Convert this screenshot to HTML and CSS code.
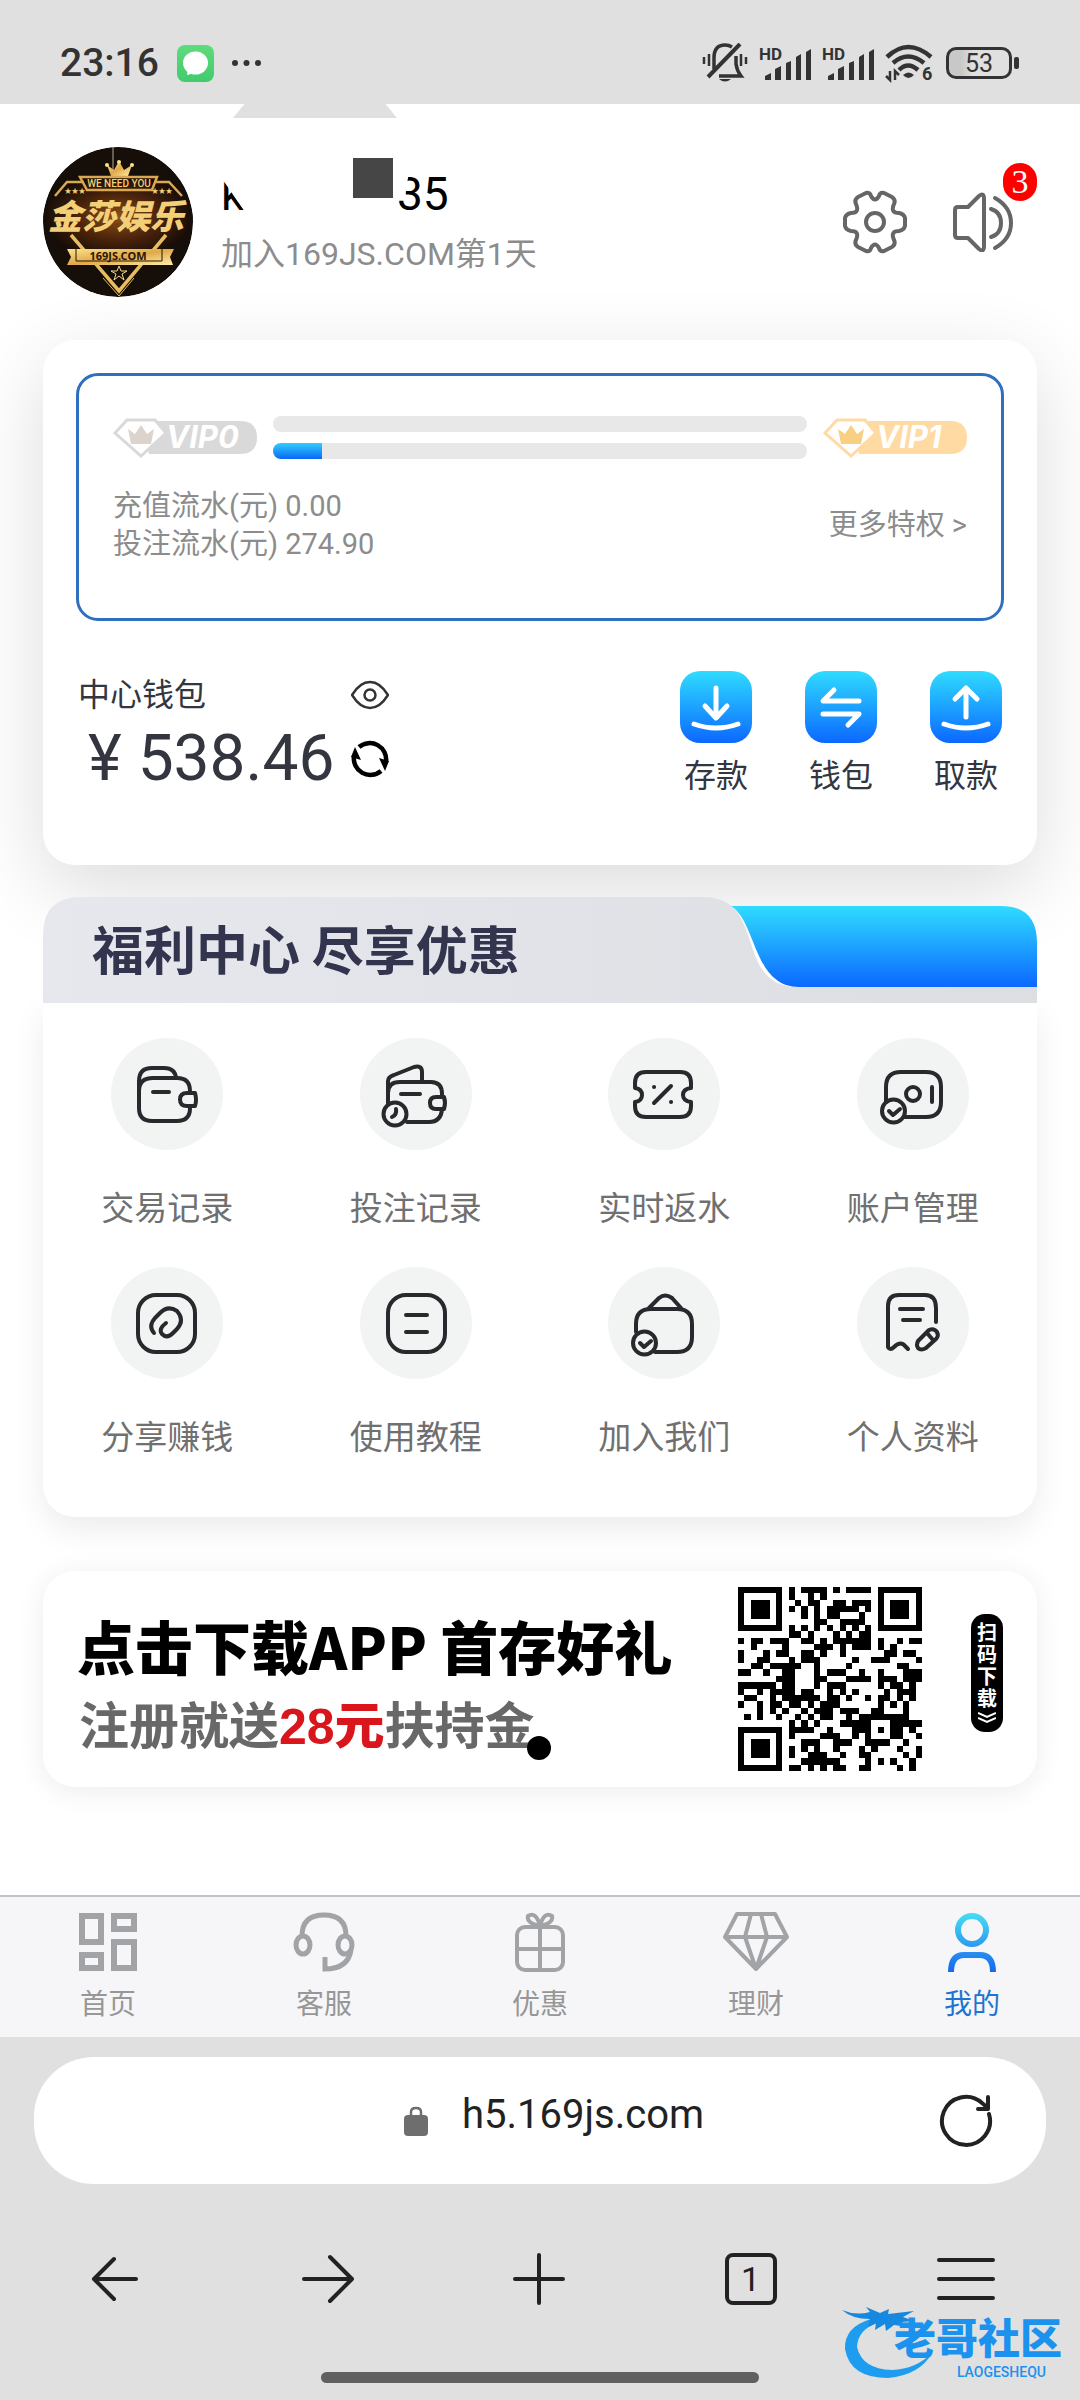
FILE: index.html
```html
<!DOCTYPE html>
<html lang="zh-CN">

<head>
    <meta charset="UTF-8">
    <meta name="viewport" content="width=device-width, initial-scale=1">
    <title>我的</title>
    <link rel="stylesheet" href="styles.css">
</head>

<body>

    <div class="statusbar">
        <span class="time">23:16</span>
        <svg class="msg" width="37" height="37" viewBox="0 0 37 37">
            <defs>
                <linearGradient id="green" x1="0" y1="0" x2="0" y2="1">
                    <stop offset="0" stop-color="#5fdc7c" />
                    <stop offset="1" stop-color="#3fcb6c" />
                </linearGradient>
                <linearGradient id="blue" x1="0" y1="0" x2="0" y2="1">
                    <stop offset="0" stop-color="#2fdcff" />
                    <stop offset="1" stop-color="#0b68ff" />
                </linearGradient>
            </defs>
            <rect width="37" height="37" rx="8" fill="url(#green)" />
            <ellipse cx="18.500" cy="18" rx="12.500" ry="11.500" fill="#fff" />
            <path d="M11 24 l-1 6 l8-2z" fill="#fff" />
        </svg>
        <svg width="29" height="8" viewBox="0 0 29 8" fill="#333">
            <circle cx="3" cy="4" r="3" />
            <circle cx="14.500" cy="4" r="3" />
            <circle cx="26" cy="4" r="3" />
        </svg>
        <div class="status-icons">
            <svg width="46" height="40" viewBox="0 0 46 40" fill="none" stroke="#333" stroke-width="3.500">
                <path d="M12 26 V15 Q12 2 23 2 Q27 2 30 4 M34 13 V21 Q35 28 39 33 H17" />
                <path d="M38 1 L6 34" stroke-width="4" />
                <path d="M2 14 v7 M7 11 v12 M39 11 v12 M44 14 v7" stroke-width="2.500" />
                <path d="M17 36 h12 q-6 5 -12 0z" fill="#333" stroke="none" />
            </svg>
            <svg class="signal" width="52" height="42" viewBox="0 -6 52 42">
                <text class="hd" x="0" y="12">HD</text>
                <path d="M6 32 v-4 l6-3 v7z M16 32 V21 l6-3 v14z M27 32 V15 l5-2 v19z M37 32 V9 l5-3 v26z M47 32 V4 l5-3 v31z" />
            </svg>
            <svg class="signal" width="52" height="42" viewBox="0 -6 52 42">
                <text class="hd" x="0" y="12">HD</text>
                <path d="M6 32 v-4 l6-3 v7z M16 32 V21 l6-3 v14z M27 32 V15 l5-2 v19z M37 32 V9 l5-3 v26z M47 32 V4 l5-3 v31z" />
            </svg>
            <svg width="50" height="46" viewBox="0 -4 50 46" fill="none" stroke="#333" stroke-width="4.500">
                <path d="M2 13 Q23 -7 46 13" />
                <path d="M8 19 Q23 6 39 19" />
                <path d="M14 26 Q23 17 33 26" />
                <path d="M18 31 q5.500-5 11 0 q-5.500 6 -11 0z" fill="#333" stroke="none" />
                <path d="M5 27 v9 l-4-4 M10 36 v-9 l4 4" stroke-width="2.500" />
                <text class="wifi6" x="37" y="36">6</text>
            </svg>
            <div class="battery"><span>53</span></div>
        </div>
    </div>

    <main>
        <header class="profile">
            <div class="notch"></div>
            <svg class="avatar" viewBox="0 0 150 150">
                <defs>
                    <radialGradient id="brown" cx=".5" cy=".5" r=".5">
                        <stop offset="0" stop-color="#8a5018" />
                        <stop offset=".55" stop-color="#4a230a" />
                        <stop offset="1" stop-color="#160d07" />
                    </radialGradient>
                    <linearGradient id="gold" x1="0" y1="0" x2="1" y2="1">
                        <stop offset="0" stop-color="#fbe38c" />
                        <stop offset=".5" stop-color="#e0a94a" />
                        <stop offset="1" stop-color="#fff0a8" />
                    </linearGradient>
                </defs>
                <circle cx="75" cy="75" r="75" fill="#160e08" />
                <ellipse cx="75" cy="70" rx="75" ry="42" fill="url(#brown)" />
                <path d="M70 0 v24" stroke="#b9aa94" />
                <path d="M68 29 l-4-11 l7 5 l5-9 l5 9 l8-5 l-4 11z" fill="url(#gold)" />
                <circle cx="64" cy="18" r="2" fill="#fbe38c" />
                <circle cx="76" cy="15" r="2" fill="#fbe38c" />
                <circle cx="89" cy="18" r="2" fill="#fbe38c" />
                <path d="M37 30 H114 L109 43 H44z M41 35 H24 L12 49 M111 35 H126 L139 49" fill="none" stroke="#d9a850" stroke-width="2.500" />
                <text class="a-need" x="76" y="40">WE NEED YOU</text>
                <text class="a-star" x="32" y="46">★★★</text>
                <text class="a-star" x="119" y="46">★★★</text>
                <text class="a-name" x="73" y="82">金莎娱乐</text>
                <path d="M28 88 L76 144 L123 88" fill="none" stroke="#e8bd60" stroke-width="3.500" />
                <path d="M60 131 L76 149 L91 131" fill="none" stroke="#e8bd60" />
                <path d="M24 102 H131 L127 110 L130 118 H24 L28 110z" fill="url(#gold)" />
                <path d="M33 102 v12 h86 v-12" fill="none" stroke="#2a1507" />
                <text class="a-site" x="75" y="113">169JS.COM</text>
                <path d="M76 119 l2 5 h6 l-5 3 l2 6 l-5-4 l-5 4 l2-6 l-5-3 h6z" fill="none" stroke="#f3d98a" />
            </svg>
            <div class="who">
                <h1><span class="k">k</span><span class="mask"></span><span class="tail">35</span></h1>
                <p>加入169JS.COM第1天</p>
            </div>
            <button class="top-btn" aria-label="设置">
                <svg width="64" height="64" viewBox="0 0 64 64" fill="none" stroke="#666" stroke-width="4" stroke-linejoin="round">
                    <path d="M23 3 Q27 2 28 6 Q32 13 36 6 Q37 2 41 3 L49 7 Q53 10 51 14 Q47 23 56 23 Q61 24 62 28 V36 Q61 40 56 41 Q47 41 51 50 Q53 54 49 57 L41 61 Q37 62 36 58 Q32 51 28 58 Q27 62 23 61 L15 57 Q11 54 13 50 Q17 41 8 41 Q3 40 2 36 V28 Q3 24 8 23 Q17 23 13 14 Q11 10 15 7z" />
                    <circle cx="32" cy="32" r="9" />
                </svg>
            </button>
            <button class="top-btn" aria-label="消息">
                <svg width="60" height="60" viewBox="0 0 60 60" fill="none" stroke="#666" stroke-width="4" stroke-linecap="round" stroke-linejoin="round">
                    <path d="M15 15 H5 Q2 15 2 18 V43 Q2 46 5 46 H15 L26 57 Q31 61 31 54 V7 Q31 0 26 4z" />
                    <path d="M38 17 Q48 20 48 31 Q48 42 38 45 M42 6 Q58 15 58 31 Q58 47 42 56" />
                </svg>
                <span class="badge">3</span>
            </button>
        </header>

        <section class="card wallet-card">
            <div class="vip">
                <div class="vip-row">
                    <svg class="vip-badge zero" width="144" height="40" viewBox="0 0 144 40">
                        <path d="M30 3 H127 Q144 3 144 19.500 Q144 36 127 36 H36z" />
                        <path class="gem" d="M14 2 H42 L53 15 L28 38 L2 15z" />
                        <path class="crown" d="M15 11 l7 5 l6-9 l6 9 l7-5 l-3 15 H18z" />
                        <text x="53" y="30">VIP0</text>
                    </svg>
                    <div class="bars">
                        <div class="bar"></div>
                        <div class="bar"><span style="width: 9.2%"></span></div>
                    </div>
                    <svg class="vip-badge one" width="144" height="40" viewBox="0 0 144 40">
                        <path d="M30 3 H127 Q144 3 144 19.500 Q144 36 127 36 H36z" />
                        <path class="gem" d="M14 2 H42 L53 15 L28 38 L2 15z" />
                        <path class="crown" d="M15 11 l7 5 l6-9 l6 9 l7-5 l-3 15 H18z" />
                        <text x="53" y="30">VIP1</text>
                    </svg>
                </div>
                <div class="vip-info">
                    <div>
                        <p>充值流水(元) 0.00</p>
                        <p>投注流水(元) 274.90</p>
                    </div>
                    <a href="#">更多特权 &gt;</a>
                </div>
            </div>

            <div class="wallet">
                <div class="balance">
                    <div class="balance-row">
                        <span>中心钱包</span>
                        <button aria-label="隐藏余额">
                            <svg width="38" height="30" viewBox="0 0 38 30" fill="none" stroke="#333" stroke-width="2.500">
                                <path d="M1 15 Q9 2 19 2 Q29 2 37 15 Q29 28 19 28 Q9 28 1 15z" />
                                <circle cx="19" cy="15" r="5.500" />
                            </svg>
                        </button>
                    </div>
                    <div class="balance-row">
                        <strong><i>¥</i>538.46</strong>
                        <button aria-label="刷新余额">
                            <svg width="38" height="38" viewBox="0 0 38 38" fill="none" stroke="#000" stroke-width="4.500">
                                <path d="M8 7 A16.500 16.500 0 0 1 35 22 M30 31 A16.500 16.500 0 0 1 3 16" />
                                <path d="M28 18 l10 3 l-4 10z M10 20 l-10-3 l4-10z" fill="#000" stroke="none" />
                            </svg>
                        </button>
                    </div>
                </div>
                <div class="actions">
                    <button>
                        <svg width="72" height="72" viewBox="0 0 72 72">
                            <rect width="72" height="72" rx="20" fill="url(#blue)" />
                            <path d="M36 17 V46 M25 35 L36 47 L47 35 M14 53 Q36 61 58 53" />
                        </svg>
                        存款
                    </button>
                    <button>
                        <svg width="72" height="72" viewBox="0 0 72 72">
                            <rect width="72" height="72" rx="20" fill="url(#blue)" />
                            <path d="M29 19 L18 30 H54 M18 43 H54 L43 54" />
                        </svg>
                        钱包
                    </button>
                    <button>
                        <svg width="72" height="72" viewBox="0 0 72 72">
                            <rect width="72" height="72" rx="20" fill="url(#blue)" />
                            <path d="M36 46 V18 M25 28 L36 17 L47 28 M14 53 Q36 61 58 53" />
                        </svg>
                        取款
                    </button>
                </div>
            </div>
        </section>

        <section class="welfare">
            <div class="welfare-head">
                <svg class="welfare-bg" viewBox="0 0 994 106" preserveAspectRatio="none">
                    <defs>
                        <linearGradient id="grey" x1="0" y1="0" x2="1" y2="0">
                            <stop offset="0" stop-color="#e7e8ee" />
                            <stop offset="1" stop-color="#dddee2" />
                        </linearGradient>
                    </defs>
                    <path d="M0 106 V38 Q0 0 38 0 H660 C725 0 690 90 755 90 H994 V106z" fill="url(#grey)" />
                    <path d="M688 9 H958 Q994 9 994 46 V90 H756 C710 90 714 25 688 9z" fill="url(#blue)" />
                </svg>
                <h2>福利中心 尽享优惠</h2>
            </div>
            <nav class="grid">
                <a href="#">
                    <svg viewBox="0 0 112 112">
                        <path d="M79 55 V53 Q79 40 66 40 H42 Q28 40 28 53 V70 Q28 83 41 83 H66 Q79 83 79 70 V68" />
                        <path d="M28 52 V43 Q28 30 41 30 H53 Q64 30 65 40" />
                        <path d="M84 55 H76 Q69 55 69 61.500 Q69 68 76 68 H84 Q86 62 84 55z M42 54 H58" />
                    </svg>
                    交易记录
                </a>
                <a href="#">
                    <svg viewBox="0 0 112 112">
                        <path d="M82 59 V56 Q82 44 71 44 H40 Q28 44 28 55 V66 M47 84 H69 Q81 84 82 71" />
                        <path d="M28 54 V43 Q28 39 34 37 L54 29 Q62 27 62 34 V44" />
                        <path d="M84 59 H76 Q70 59 70 65 Q70 71 76 71 H84 Q86 65 84 59z M41 56 H60" />
                        <circle cx="35" cy="76" r="11.500" />
                        <path d="M36 71 Q37 77 32 79" />
                    </svg>
                    投注记录
                </a>
                <a href="#">
                    <svg viewBox="0 0 112 112">
                        <path d="M27 50 V45 Q27 34 38 34 H72 Q83 34 83 45 V50 Q75 51 75 57 Q75 63 83 64 V68 Q83 79 72 79 H38 Q27 79 27 68 V64 Q34 63 34 57 Q34 51 27 50z" />
                        <path d="M63 48 L46 65 M46 49 h.1 M63 64 h.1" />
                    </svg>
                    实时返水
                </a>
                <a href="#">
                    <svg viewBox="0 0 112 112">
                        <path d="M29 64 V49 Q29 34 44 34 H69 Q84 34 84 49 V64 Q84 79 69 79 H47" />
                        <circle cx="56" cy="56" r="7" />
                        <path d="M75 49 V64 M32 73 l4 4 l7-6" />
                        <circle cx="36.500" cy="73" r="11.500" />
                    </svg>
                    账户管理
                </a>
                <a href="#">
                    <svg viewBox="0 0 112 112">
                        <rect x="27" y="28" width="57" height="57" rx="18" />
                        <path d="M43 66 Q37 59 44 51 L49 46 Q57 38 66 44 Q74 53 66 62 L62 66 Q56 72 51 67 Q47 62 55 56" />
                    </svg>
                    分享赚钱
                </a>
                <a href="#">
                    <svg viewBox="0 0 112 112">
                        <rect x="28" y="28" width="57" height="57" rx="18" />
                        <path d="M46 48 H67 M46 65 H67" />
                    </svg>
                    使用教程
                </a>
                <a href="#">
                    <svg viewBox="0 0 112 112">
                        <path d="M28 65 V57 Q28 42 43 42 H69 Q84 42 84 57 V70 Q84 85 69 85 H47" />
                        <path d="M41 41 L51 31 Q57 26 64 31 L73 41 M32 76 l4 4 l7-6" />
                        <circle cx="36.500" cy="76" r="11.500" />
                    </svg>
                    加入我们
                </a>
                <a href="#">
                    <svg viewBox="0 0 112 112">
                        <path d="M79 55 V41 Q79 28 68 28 H42 Q31 28 31 39 V80 Q33 84 37 80 Q44 73 49 80 L51 82" />
                        <path d="M43 42 H66 M46 53 H63" />
                        <path d="M61 74 L72 63 Q77 61 80 65 Q82 69 79 72 L69 81 Q64 84 61 81 Q59 78 61 74z M70 66 l6 7" />
                    </svg>
                    个人资料
                </a>
            </nav>
        </section>

        <section class="card promo">
            <div class="promo-text">
                <h3>点击下载APP 首存好礼</h3>
                <p>注册就送<b>28元</b>扶持金<span class="dot"></span></p>
            </div>
            <svg class="qr" viewBox="0 0 29 29" shape-rendering="crispEdges">
                <path id="qr" />
            </svg>
            <div class="scan">
                <span>扫码下载</span>
                <svg width="18" height="12" viewBox="0 0 18 12" fill="none" stroke="#fff" stroke-width="2">
                    <path d="M0 1 L9 5 L18 1 M0 6 L9 10 L18 6" />
                </svg>
            </div>
        </section>
    </main>

    <nav class="tabbar">
        <a href="#">
            <svg width="60" height="60" viewBox="0 0 60 60" fill="none" stroke="#a2a3a6" stroke-width="6">
                <path d="M4 4 H23 V30 H4z M36 4 H56 V17 H36z M4 43 H23 V56 H4z M36 30 H56 V56 H36z" />
            </svg>
            首页
        </a>
        <a href="#">
            <svg width="64" height="60" viewBox="0 0 64 60" fill="none" stroke="#a2a3a6" stroke-width="5">
                <path d="M10 24 Q10 3 32 3 Q54 3 54 24 M59 38 Q56 57 33 57 V45" />
                <ellipse cx="11" cy="33" rx="7" ry="9" />
                <ellipse cx="53" cy="33" rx="7" ry="9" />
            </svg>
            客服
        </a>
        <a href="#">
            <svg width="52" height="60" viewBox="0 0 52 60" fill="none" stroke="#a2a3a6" stroke-width="4">
                <rect x="3" y="15" width="46" height="43" rx="8" />
                <path d="M26 15 V58 M3 37 H49 M26 14 Q12 11 14 4 Q22-1 26 14 Q30-1 38 4 Q40 11 26 14" />
            </svg>
            优惠
        </a>
        <a href="#">
            <svg width="66" height="60" viewBox="0 0 66 60" fill="none" stroke="#a2a3a6" stroke-width="4" stroke-linejoin="round">
                <path d="M14 2 H52 L64 25 L33 57 L2 25z M2 25 H64 M28 2 L22 25 L33 57 L44 25 L38 2" />
            </svg>
            理财
        </a>
        <a class="active" href="#">
            <svg width="50" height="60" viewBox="0 0 50 60" fill="none" stroke-width="6">
                <defs>
                    <linearGradient id="me" gradientUnits="userSpaceOnUse" x1="0" y1="0" x2="0" y2="60">
                        <stop offset="0" stop-color="#48e0f2" />
                        <stop offset="1" stop-color="#1767ee" />
                    </linearGradient>
                </defs>
                <circle cx="25" cy="18" r="14" stroke="url(#me)" />
                <path d="M4 60 Q4 43 17 43 H33 Q46 43 46 60" stroke="url(#me)" />
            </svg>
            我的
        </a>
    </nav>

    <footer class="browser">
        <div class="address">
            <svg width="24" height="30" viewBox="0 0 24 30">
                <rect y="9" width="24" height="21" rx="4" fill="#6e6e6e" />
                <path d="M7 10 V6 Q7 2 12 2 Q17 2 17 6 V10" fill="none" stroke="#6e6e6e" stroke-width="2.500" />
            </svg>
            <span>h5.169js.com</span>
            <button class="reload" aria-label="刷新">
                <svg width="54" height="54" viewBox="0 0 54 54" fill="none" stroke="#222" stroke-width="4" stroke-linecap="round" stroke-linejoin="round">
                    <path d="M50 20 A24 24 0 1 1 43 9 L49 14 M49 3 V15 H39" />
                </svg>
            </button>
        </div>
        <div class="tools">
            <button aria-label="后退">
                <svg width="52" height="52" viewBox="0 0 52 52">
                    <path d="M46 26 H5 M24 6 L4 26 L24 46" />
                </svg>
            </button>
            <button aria-label="前进">
                <svg width="52" height="52" viewBox="0 0 52 52">
                    <path d="M2 26 H50 M28 4 L50 26 L28 48" />
                </svg>
            </button>
            <button aria-label="新建标签">
                <svg width="52" height="52" viewBox="0 0 52 52">
                    <path d="M26 2 V50 M2 26 H50" />
                </svg>
            </button>
            <button aria-label="标签页"><span class="tabs">1</span></button>
            <button aria-label="菜单">
                <svg width="60" height="52" viewBox="0 0 60 52">
                    <path d="M3 7 H57 M3 26 H57 M3 45 H57" />
                </svg>
            </button>
        </div>
        <div class="gesture"></div>

        <div class="watermark">
            <svg width="100" height="72" viewBox="0 0 100 72">
                <path d="M29 12 Q2 20 3 42 Q8 71 46 71 Q78 68 90 46 Q74 62 50 63 Q20 62 15 40 Q16 22 36 16z" fill="#1e9df0" />
                <path d="M0 3 Q14 9 28 5 L24 0 L38 6 L47 2 L46 7 L72 4 L61 10 L72 14 L60 15 L66 20 L52 18 L44 24 L43 17 L33 23 L34 16 L26 20 L28 12 Q10 12 0 3z" fill="#1688e0" />
            </svg>
            <p>老哥社区</p>
            <small>LAOGESHEQU</small>
        </div>
    </footer>

    <script>
        // dark modules per row, as start,length pairs
        const rows = [
            "0,7 8,1 10,4 15,1 17,4 22,7",
            "0,1 6,1 8,1 11,1 13,1 22,1 28,1",
            "0,1 2,3 6,1 9,1 11,2 15,2 18,3 22,1 24,3 28,1",
            "0,1 2,3 6,1 8,1 10,1 12,1 14,5 20,1 22,1 24,3 28,1",
            "0,1 2,3 6,1 10,1 12,1 14,2 19,1 22,1 24,3 28,1",
            "0,1 6,1 12,2 16,4 22,1 28,1",
            "0,7 8,1 10,1 12,1 14,1 16,1 18,1 20,1 22,7",
            "8,2 11,1 15,1 17,1 19,2",
            "0,1 2,2 5,3 10,2 13,1 15,6 22,1 25,1 27,2",
            "2,1 7,1 12,3 16,1 18,3 22,1 24,1",
            "0,1 4,1 6,2 10,2 13,1 16,1 23,2 26,2",
            "0,1 3,2 8,1 10,3 18,1 21,3 28,1",
            "2,2 5,5 12,1 17,1 25,2",
            "0,2 4,1 7,2 12,1 14,3 19,1 22,1 26,3",
            "6,3 12,2 17,4 22,3 26,3",
            "0,6 7,2 12,1 14,3 22,1 24,2 27,1",
            "0,1 3,1 5,4 10,2 14,1 16,1 18,1 23,1 25,3",
            "1,2 5,1 7,6 14,2 17,1 20,1 22,2 25,1 27,1",
            "0,1 3,1 5,2 8,2 11,1 13,3 22,1 24,1 26,1",
            "3,1 5,1 7,1 10,1 12,3 16,3 21,2 26,1",
            "1,1 3,1 6,1 9,1 11,1 13,2 17,1 19,8",
            "8,1 10,1 12,1 16,5 24,5",
            "0,7 8,4 14,1 18,3 22,1 24,2 27,1",
            "0,1 6,1 8,1 13,3 18,1 20,1 24,2 28,1",
            "0,1 2,3 6,1 10,3 15,3 20,4 26,1",
            "0,1 2,3 6,1 8,1 10,1 12,1 15,1 19,1 21,1 25,1 28,1",
            "0,1 2,3 6,1 8,1 11,3 16,1 19,2 26,1 28,1",
            "0,1 6,1 10,6 20,1 22,1 24,1 27,1",
            "0,7 8,2 11,1 13,1 15,2 19,2 25,1 27,1"
        ];

        let d = "";
        rows.forEach((row, y) => {
            row.split(" ").forEach(run => {
                const [x, w] = run.split(",");
                d += `M${x} ${y}h${w}v1h-${w}z`;
            })
        })
        document.querySelector("#qr").setAttribute("d", d);

    </script>

</body>

</html>
```

FILE: styles.css
```css
* {
    box-sizing: border-box;
    margin: 0;
    padding: 0;
}

body {
    background-color: #fff;
    color: #34363f;
    font-family: Roboto, "Noto Sans CJK SC", sans-serif;
    font-size: 32px;
}

button {
    background: none;
    border: none;
    color: inherit;
    font: inherit;
}

a {
    color: inherit;
    text-decoration: none;
}

svg {
    display: block;
    flex: none;
}

/* status bar */

.statusbar {
    display: flex;
    align-items: center;
    height: 104px;
    padding: 22px 60px 0;
    background-color: #e0e0e0;
}

.time {
    color: #333;
    font-size: 39px;
    font-weight: 500;
}

.msg {
    margin: 0 18px 0 18px;
}

.status-icons {
    display: flex;
    align-items: center;
    gap: 11px;
    margin-left: auto;
}

.signal {
    fill: #333;
}

.hd {
    font-size: 17px;
    font-weight: 700;
}

.wifi6 {
    fill: #333;
    stroke: none;
    font-size: 18px;
    font-weight: 700;
}

.battery {
    position: relative;
    width: 66px;
    height: 32px;
    border: 3px solid #333;
    border-radius: 10px;
    background: linear-gradient(to right, #c8c8c8 20%, #e0e0e0 40%);
    color: #333;
    font-size: 25px;
    line-height: 27px;
    text-align: center;
    margin-right: 8px;
}

.battery::after {
    content: "";
    position: absolute;
    right: -10px;
    top: 7px;
    width: 5px;
    height: 12px;
    border-radius: 2px;
    background-color: #333;
}

/* profile */

main {
    padding: 0 43px;
}

.profile {
    position: relative;
    display: flex;
    align-items: center;
    height: 236px;
}

.notch {
    position: absolute;
    top: 0;
    left: 190px;
    width: 164px;
    height: 14px;
    background-color: #e0e0e0;
    clip-path: polygon(7% 0, 93% 0, 100% 100%, 0 100%);
}

.avatar {
    width: 150px;
    height: 150px;
    border-radius: 50%;
}

.a-need,
.a-name,
.a-star,
.a-site {
    fill: #f3cf78;
    text-anchor: middle;
}

.a-need {
    font-size: 10px;
    font-weight: 500;
}

.a-star {
    font-size: 7px;
}

.a-name {
    font-size: 34px;
    font-weight: 900;
    font-style: italic;
}

.a-site {
    fill: #2a1507;
    font-family: "Noto Sans", sans-serif;
    font-size: 11px;
    font-weight: 700;
}

.who {
    flex: 1;
    padding: 0 0 8px 28px;
}

.who h1 {
    display: flex;
    align-items: center;
    color: #000;
    font-size: 46px;
    font-weight: 400;
    line-height: 64px;
}

/* the middle of the account name is hidden */
.k {
    width: 132px;
    clip-path: polygon(0 24%, 24px 78%, 24px 100%, 0 100%);
}

.mask {
    width: 40px;
    height: 40px;
    margin-bottom: 32px;
    background-color: #464646;
}

.tail {
    padding-left: 4px;
    clip-path: polygon(18px 0, 100% 0, 100% 100%, 0 100%, 0 60%, 12px 50%);
}

.who p {
    color: #8c8c8c;
    font-size: 32px;
    line-height: 48px;
}

.top-btn {
    position: relative;
    margin-left: 46px;
}

.top-btn:last-child {
    margin-right: 24px;
}

.badge {
    position: absolute;
    top: -29px;
    right: -24px;
    width: 34px;
    height: 38px;
    border-radius: 17px;
    background-color: #f00;
    color: #fff;
    font-family: "Liberation Serif", serif;
    font-size: 34px;
    line-height: 38px;
    text-align: center;
}

/* wallet */

.card {
    border-radius: 32px;
    background-color: #fff;
}

.wallet-card {
    padding: 33px;
    height: 525px;
    box-shadow: 0 24px 80px rgba(0, 0, 0, 0.14);
}

.vip {
    height: 248px;
    padding: 36px 34px;
    border: 3px solid #2f6fc0;
    border-radius: 22px;
}

.vip-row {
    display: flex;
    align-items: center;
    gap: 16px;
    padding-top: 4px;
}

.bars {
    flex: 1;
}

.bar {
    height: 16px;
    border-radius: 8px;
    background-color: #e8e8e8;
    overflow: hidden;
}

.bar + .bar {
    margin-top: 11px;
}

.bar span {
    display: block;
    height: 100%;
    background: linear-gradient(#2fcfff, #0b68f5);
}

.vip-badge text {
    fill: #fff;
    font-family: Inter, sans-serif;
    font-size: 31px;
    font-style: italic;
    font-weight: 700;
}

.vip-badge .gem {
    fill: #fff;
    stroke-width: 3px;
}

.zero {
    fill: #d9d9d9;
    stroke: none;
}

.zero .gem {
    stroke: #d9d9d9;
}

.zero .crown {
    fill: #dcd3cd;
}

.one {
    fill: #ffdaa3;
}

.one .gem {
    stroke: #ffdaa3;
}

.one .crown {
    fill: #f9cf82;
}

.vip-info {
    display: flex;
    align-items: center;
    justify-content: space-between;
    margin-top: 28px;
    color: #8c8c8c;
    font-size: 29px;
    line-height: 38px;
}

.wallet {
    display: flex;
    justify-content: space-between;
    padding: 50px 2px 0 0;
}

.balance {
    width: 313px;
    padding-left: 2px;
}

.balance-row {
    display: flex;
    align-items: center;
    justify-content: space-between;
    line-height: 48px;
}

.balance-row + .balance-row {
    line-height: 80px;
}

.balance strong {
    padding-left: 10px;
    font-size: 64px;
    font-weight: 400;
}

.balance i {
    margin-right: 16px;
    font-style: normal;
}

.actions {
    display: flex;
    gap: 53px;
}

.actions button {
    display: flex;
    flex-direction: column;
    align-items: center;
    gap: 10px;
    line-height: 46px;
}

.actions path {
    fill: none;
    stroke: #fff;
    stroke-width: 5px;
    stroke-linecap: round;
    stroke-linejoin: round;
}

/* welfare */

.welfare {
    margin-top: 32px;
    border-radius: 36px 36px 32px 32px;
}

.welfare-head {
    position: relative;
    height: 106px;
    padding-left: 49px;
}

.welfare-bg {
    position: absolute;
    left: 0;
    top: 0;
    width: 100%;
    height: 100%;
}

.welfare h2 {
    position: relative;
    color: #33344d;
    font-family: "Noto Sans CJK SC", sans-serif;
    font-size: 52px;
    font-weight: 700;
    line-height: 102px;
}

.grid {
    display: grid;
    grid-template-columns: repeat(4, 1fr);
    row-gap: 34px;
    padding: 35px 0 55px;
    border-radius: 0 0 32px 32px;
    background-color: #fff;
    box-shadow: 0 12px 32px rgba(0, 0, 0, 0.08);
}

.grid a {
    display: flex;
    flex-direction: column;
    align-items: center;
    gap: 35px;
    color: #707070;
    font-size: 33px;
    line-height: 48px;
}

.grid svg {
    width: 112px;
    height: 112px;
    border-radius: 50%;
    background-color: #f2f3f3;
    fill: none;
    stroke: #28292c;
    stroke-width: 4px;
    stroke-linecap: round;
    stroke-linejoin: round;
}

/* promo */

.promo {
    display: flex;
    align-items: center;
    margin-top: 54px;
    padding: 16px 34px;
    box-shadow: 0 4px 28px rgba(0, 0, 0, 0.08);
}

.promo-text {
    flex: 1;
    padding-top: 10px;
    font-family: "Noto Sans CJK SC", sans-serif;
    white-space: nowrap;
}

.promo h3 {
    color: #000;
    font-size: 58px;
    font-weight: 900;
    line-height: 80px;
}

.promo p {
    position: relative;
    width: max-content;
    padding-left: 2px;
    color: #686868;
    font-size: 50px;
    font-weight: 700;
    line-height: 74px;
}

.promo b {
    color: #d8161c;
    font-family: "Liberation Sans", "Noto Sans CJK SC", sans-serif;
}

.dot {
    position: absolute;
    right: -16px;
    bottom: 4px;
    width: 24px;
    height: 24px;
    border-radius: 50%;
    background-color: #000;
}

.qr {
    width: 184px;
    height: 184px;
}

.scan {
    display: flex;
    flex-direction: column;
    align-items: center;
    justify-content: center;
    gap: 2px;
    width: 32px;
    height: 118px;
    margin: 0 0 12px 49px;
    border-radius: 14px;
    background-color: #000;
}

.scan span {
    width: 20px;
    color: #fff;
    font-size: 20px;
    font-weight: 700;
    line-height: 22px;
}

/* tab bar */

.tabbar {
    display: flex;
    height: 142px;
    margin-top: 108px;
    padding-top: 15px;
    border-top: 2px solid #c2c3c6;
    background-color: #f6f6f9;
}

.tabbar a {
    display: flex;
    flex: 1;
    flex-direction: column;
    align-items: center;
    gap: 12px;
    color: #979797;
    font-size: 28px;
    line-height: 42px;
}

.tabbar .active {
    color: #1f74d0;
}

/* browser */

.browser {
    position: relative;
    height: 364px;
    padding: 20px 34px 0;
    background-color: #e0e0e0;
}

.address {
    position: relative;
    display: flex;
    align-items: center;
    justify-content: center;
    gap: 34px;
    height: 127px;
    padding-left: 28px;
    border-radius: 60px;
    background-color: #fff;
    color: #222;
    font-size: 40px;
}

.address span {
    padding-bottom: 12px;
}

.reload {
    position: absolute;
    right: 53px;
}

.tools {
    display: flex;
    justify-content: space-between;
    padding: 69px 50px 0 56px;
    color: #222;
}

.tools svg {
    fill: none;
    stroke: #222;
    stroke-width: 4px;
    stroke-linecap: round;
    stroke-linejoin: round;
}

.tabs {
    display: block;
    width: 52px;
    height: 52px;
    border: 4px solid #222;
    border-radius: 8px;
    font-size: 34px;
    line-height: 44px;
}

.gesture {
    width: 438px;
    height: 11px;
    margin: 67px auto 0;
    border-radius: 6px;
    background-color: #606060;
}

.watermark {
    position: absolute;
    right: 18px;
    bottom: 22px;
    width: 220px;
    height: 72px;
    color: #1a92ee;
}

.watermark svg {
    position: absolute;
}

.watermark p {
    position: absolute;
    right: 0;
    top: 12px;
    font-size: 42px;
    font-weight: 900;
    line-height: 42px;
}

.watermark small {
    position: absolute;
    right: 16px;
    top: 58px;
    font-size: 14px;
    font-weight: 500;
    line-height: 14px;
}
```
